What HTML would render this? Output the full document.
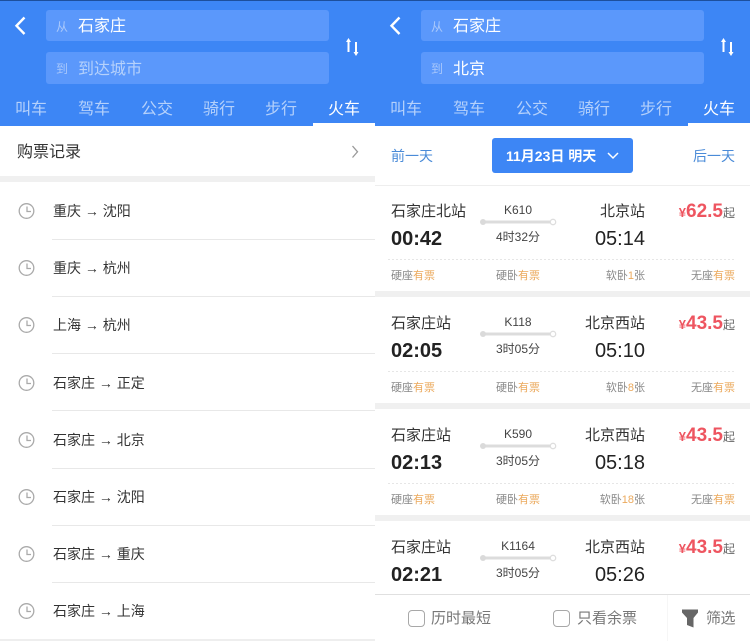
<!DOCTYPE html>
<html lang="zh"><head><meta charset="utf-8">
<style>
html,body{margin:0;padding:0;width:750px;height:641px;overflow:hidden;background:#fff}
body{position:relative;font-family:"Liberation Sans","Noto Sans CJK SC",sans-serif}
#w{left:0;top:0;width:750px;height:641px;overflow:hidden;filter:blur(.35px)}
div,span.a,svg{position:absolute}
.t{white-space:nowrap;line-height:20px;height:20px}
.c{transform:translateX(-50%)}
.r{transform:translateX(-100%)}
.inp{left:46px;width:283px;background:#5b98fb;border-radius:3px}
.lbl{font-size:12px;color:#a9c8fb}
.v{font-size:16px;color:#fff}
.tab{font-size:16px;color:#b5d1fb;top:100px}
.row{font-size:14px;color:#333}
.s{font-size:15px;color:#333}
.n{font-size:12px;color:#444}
.d{font-size:12px;color:#444}
.tm{font-size:20px;color:#222}
.tb{font-weight:bold}
.sm{font-size:11px;color:#888}
.sm b{font-weight:normal;color:#eba95c}
.p{font-size:19px;font-weight:bold;color:#ee5560}
.p i{font-style:normal;font-size:13px}
.p em{font-style:normal;font-weight:normal;font-size:12px;color:#666}
</style></head><body><div id="w">
<!-- header shared -->
<div style="left:0;top:0;width:750px;height:126px;background:#3d86f5"></div>
<div style="left:0;top:0;width:750px;height:1px;background:#1d4f9c"></div>

<!-- LEFT header -->
<svg style="left:14px;top:16px" width="14" height="20" viewBox="0 0 14 20"><path d="M10.500 1.500 2.500 9.800 10.500 18" fill="none" stroke="#fff" stroke-width="2.400"/></svg>
<div class="inp" style="top:10px;height:31px"></div>
<div class="inp" style="top:52px;height:32px"></div>
<div class="t lbl" style="left:56px;top:17px">从</div>
<div class="t v" style="left:78px;top:17px">石家庄</div>
<div class="t lbl" style="left:56px;top:59px">到</div>
<div class="t v" style="left:78px;top:60px;color:#b5d1fb">到达城市</div>
<svg style="left:345px;top:37px" width="16" height="20" viewBox="0 0 16 20"><path d="M3.500 15V3" fill="none" stroke="#fff" stroke-width="2"/><path d="M11 5V16" fill="none" stroke="#fff" stroke-width="2"/><path d="M1 5 3.500 1 6 5Z M8.500 15 11 19 13.500 15Z" fill="#fff"/></svg>
<div class="t tab c" style="left:31px">叫车</div>
<div class="t tab c" style="left:94px">驾车</div>
<div class="t tab c" style="left:157px">公交</div>
<div class="t tab c" style="left:219px">骑行</div>
<div class="t tab c" style="left:281px">步行</div>
<div class="t tab c" style="left:344px;color:#fff">火车</div>
<div style="left:313px;top:123px;width:62px;height:3px;background:#fff"></div>

<!-- RIGHT header -->
<svg style="left:389px;top:16px" width="14" height="20" viewBox="0 0 14 20"><path d="M10.500 1.500 2.500 9.800 10.500 18" fill="none" stroke="#fff" stroke-width="2.400"/></svg>
<div class="inp" style="left:421px;top:10px;height:31px"></div>
<div class="inp" style="left:421px;top:52px;height:32px"></div>
<div class="t lbl" style="left:431px;top:17px">从</div>
<div class="t v" style="left:453px;top:17px">石家庄</div>
<div class="t lbl" style="left:431px;top:59px">到</div>
<div class="t v" style="left:453px;top:60px">北京</div>
<svg style="left:720px;top:37px" width="16" height="20" viewBox="0 0 16 20"><path d="M3.500 15V3" fill="none" stroke="#fff" stroke-width="2"/><path d="M11 5V16" fill="none" stroke="#fff" stroke-width="2"/><path d="M1 5 3.500 1 6 5Z M8.500 15 11 19 13.500 15Z" fill="#fff"/></svg>
<div class="t tab c" style="left:406px">叫车</div>
<div class="t tab c" style="left:469px">驾车</div>
<div class="t tab c" style="left:532px">公交</div>
<div class="t tab c" style="left:594px">骑行</div>
<div class="t tab c" style="left:656px">步行</div>
<div class="t tab c" style="left:719px;color:#fff">火车</div>
<div style="left:688px;top:123px;width:62px;height:3px;background:#fff"></div>

<!-- LEFT body -->
<div class="t" style="left:17px;top:143px;font-size:16px;color:#333">购票记录</div>
<svg style="left:350px;top:144px" width="10" height="16" viewBox="0 0 10 16"><path d="M2.500 2 7.500 7.800 2.500 13.500" fill="none" stroke="#999" stroke-width="1.300"/></svg>
<div style="left:0;top:176px;width:375px;height:6px;background:#f0f0f0"></div>

<svg style="left:0;top:0;overflow:visible" width="375" height="641">
<g fill="none" stroke="#aaa" stroke-width="1.300">
<circle cx="26.500" cy="211" r="7.300"/><path d="M27 206.500V211.500H31"/>
<circle cx="26.500" cy="268" r="7.300"/><path d="M27 263.500V268.500H31"/>
<circle cx="26.500" cy="325" r="7.300"/><path d="M27 320.500V325.500H31"/>
<circle cx="26.500" cy="383" r="7.300"/><path d="M27 378.500V383.500H31"/>
<circle cx="26.500" cy="440" r="7.300"/><path d="M27 435.500V440.500H31"/>
<circle cx="26.500" cy="497" r="7.300"/><path d="M27 492.500V497.500H31"/>
<circle cx="26.500" cy="554" r="7.300"/><path d="M27 549.500V554.500H31"/>
<circle cx="26.500" cy="611" r="7.300"/><path d="M27 606.500V611.500H31"/>
</g>
<g fill="#e8e8e8">
<rect x="52" y="239" width="323" height="1"/><rect x="52" y="296" width="323" height="1"/><rect x="52" y="353" width="323" height="1"/><rect x="52" y="410" width="323" height="1"/><rect x="52" y="468" width="323" height="1"/><rect x="52" y="525" width="323" height="1"/><rect x="52" y="582" width="323" height="1"/><rect x="0" y="639" width="375" height="2" fill="#eee"/>
</g>
</svg>
<div class="t row" style="left:53px;top:201px">重庆 → 沈阳</div>
<div class="t row" style="left:53px;top:258px">重庆 → 杭州</div>
<div class="t row" style="left:53px;top:315px">上海 → 杭州</div>
<div class="t row" style="left:53px;top:373px">石家庄 → 正定</div>
<div class="t row" style="left:53px;top:430px">石家庄 → 北京</div>
<div class="t row" style="left:53px;top:487px">石家庄 → 沈阳</div>
<div class="t row" style="left:53px;top:544px">石家庄 → 重庆</div>
<div class="t row" style="left:53px;top:601px">石家庄 → 上海</div>

<!-- RIGHT body -->
<div class="t" style="left:391px;top:146px;font-size:14px;color:#4a8bd8">前一天</div>
<div class="t r" style="left:735px;top:146px;font-size:14px;color:#4a8bd8">后一天</div>
<div style="left:492px;top:138px;width:141px;height:35px;background:#3d86f5;border-radius:3px"></div>
<div class="t" style="left:506px;top:146px;font-size:14px;font-weight:bold;color:#fff">11月23日 明天</div>
<svg style="left:606px;top:151px" width="14" height="10" viewBox="0 0 14 10"><path d="M2 2 7 7 12 2" fill="none" stroke="#fff" stroke-width="1.500"/></svg>
<div style="left:375px;top:185px;width:375px;height:1px;background:#eee"></div>

<!-- Card 1 -->
<div class="t s" style="left:391px;top:202px">石家庄北站</div>
<div class="t n c" style="left:518px;top:200px">K610</div>
<div class="t s r" style="left:645px;top:202px">北京站</div>
<div class="t p r" style="left:735px;top:202px"><i>¥</i>62.5<em>起</em></div>
<div class="t tm tb" style="left:391px;top:229px">00:42</div>
<div class="t d c" style="left:518px;top:227px">4时32分</div>
<div class="t tm r" style="left:645px;top:229px">05:14</div>
<div class="t sm" style="left:391px;top:266px">硬座<b>有票</b></div>
<div class="t sm" style="left:496px;top:266px">硬卧<b>有票</b></div>
<div class="t sm r" style="left:645px;top:266px">软卧<b>1</b>张</div>
<div class="t sm r" style="left:735px;top:266px">无座<b>有票</b></div>
<!-- Card 2 -->
<div class="t s" style="left:391px;top:314px">石家庄站</div>
<div class="t n c" style="left:518px;top:312px">K118</div>
<div class="t s r" style="left:645px;top:314px">北京西站</div>
<div class="t p r" style="left:735px;top:314px"><i>¥</i>43.5<em>起</em></div>
<div class="t tm tb" style="left:391px;top:341px">02:05</div>
<div class="t d c" style="left:518px;top:339px">3时05分</div>
<div class="t tm r" style="left:645px;top:341px">05:10</div>
<div class="t sm" style="left:391px;top:378px">硬座<b>有票</b></div>
<div class="t sm" style="left:496px;top:378px">硬卧<b>有票</b></div>
<div class="t sm r" style="left:645px;top:378px">软卧<b>8</b>张</div>
<div class="t sm r" style="left:735px;top:378px">无座<b>有票</b></div>
<!-- Card 3 -->
<div class="t s" style="left:391px;top:426px">石家庄站</div>
<div class="t n c" style="left:518px;top:424px">K590</div>
<div class="t s r" style="left:645px;top:426px">北京西站</div>
<div class="t p r" style="left:735px;top:426px"><i>¥</i>43.5<em>起</em></div>
<div class="t tm tb" style="left:391px;top:453px">02:13</div>
<div class="t d c" style="left:518px;top:451px">3时05分</div>
<div class="t tm r" style="left:645px;top:453px">05:18</div>
<div class="t sm" style="left:391px;top:490px">硬座<b>有票</b></div>
<div class="t sm" style="left:496px;top:490px">硬卧<b>有票</b></div>
<div class="t sm r" style="left:645px;top:490px">软卧<b>18</b>张</div>
<div class="t sm r" style="left:735px;top:490px">无座<b>有票</b></div>
<!-- Card 4 -->
<div class="t s" style="left:391px;top:538px">石家庄站</div>
<div class="t n c" style="left:518px;top:536px">K1164</div>
<div class="t s r" style="left:645px;top:538px">北京西站</div>
<div class="t p r" style="left:735px;top:538px"><i>¥</i>43.5<em>起</em></div>
<div class="t tm tb" style="left:391px;top:565px">02:21</div>
<div class="t d c" style="left:518px;top:563px">3时05分</div>
<div class="t tm r" style="left:645px;top:565px">05:26</div>

<svg style="left:375px;top:0" width="375" height="641">
<path d="M13 259.500H360M13 371.500H360M13 483.500H360" stroke-dasharray="2 2" stroke="#e6e6e6" fill="none"/>
<path d="M108 222H178M108 334H178M108 446H178M108 558H178" stroke="#dcdcdc" stroke-width="3"/>
<g fill="#dadada"><circle cx="108" cy="222" r="3"/><circle cx="108" cy="334" r="3"/><circle cx="108" cy="446" r="3"/><circle cx="108" cy="558" r="3"/></g>
<g fill="#fff" stroke="#dedede" stroke-width="1.300"><circle cx="178" cy="222" r="2.700"/><circle cx="178" cy="334" r="2.700"/><circle cx="178" cy="446" r="2.700"/><circle cx="178" cy="558" r="2.700"/></g>
<g fill="#f0f0f0"><rect x="0" y="291" width="375" height="6"/><rect x="0" y="403" width="375" height="6"/><rect x="0" y="515" width="375" height="6"/></g>
</svg>

<!-- bottom bar -->
<div style="left:375px;top:594px;width:375px;height:47px;background:#fff;border-top:1px solid #e0e0e0;box-sizing:border-box"></div>
<div style="left:667px;top:595px;width:1px;height:46px;background:#f6f6f6"></div>
<div style="left:408px;top:610px;width:17px;height:17px;border:1.500px solid #a8a8a8;border-radius:4px;box-sizing:border-box"></div>
<div class="t" style="left:431px;top:609px;font-size:15px;color:#777">历时最短</div>
<div style="left:553px;top:610px;width:17px;height:17px;border:1.500px solid #a8a8a8;border-radius:4px;box-sizing:border-box"></div>
<div class="t" style="left:577px;top:609px;font-size:15px;color:#777">只看余票</div>
<svg style="left:681px;top:609px" width="18" height="19" viewBox="0 0 18 19"><path d="M1 0.500H17V3.500L12.500 9V18.500L6 16V9L1 3.500Z" fill="#666"/></svg>
<div class="t" style="left:706px;top:609px;font-size:15px;color:#777;letter-spacing:-.5px">筛选</div>
</div></body></html>
